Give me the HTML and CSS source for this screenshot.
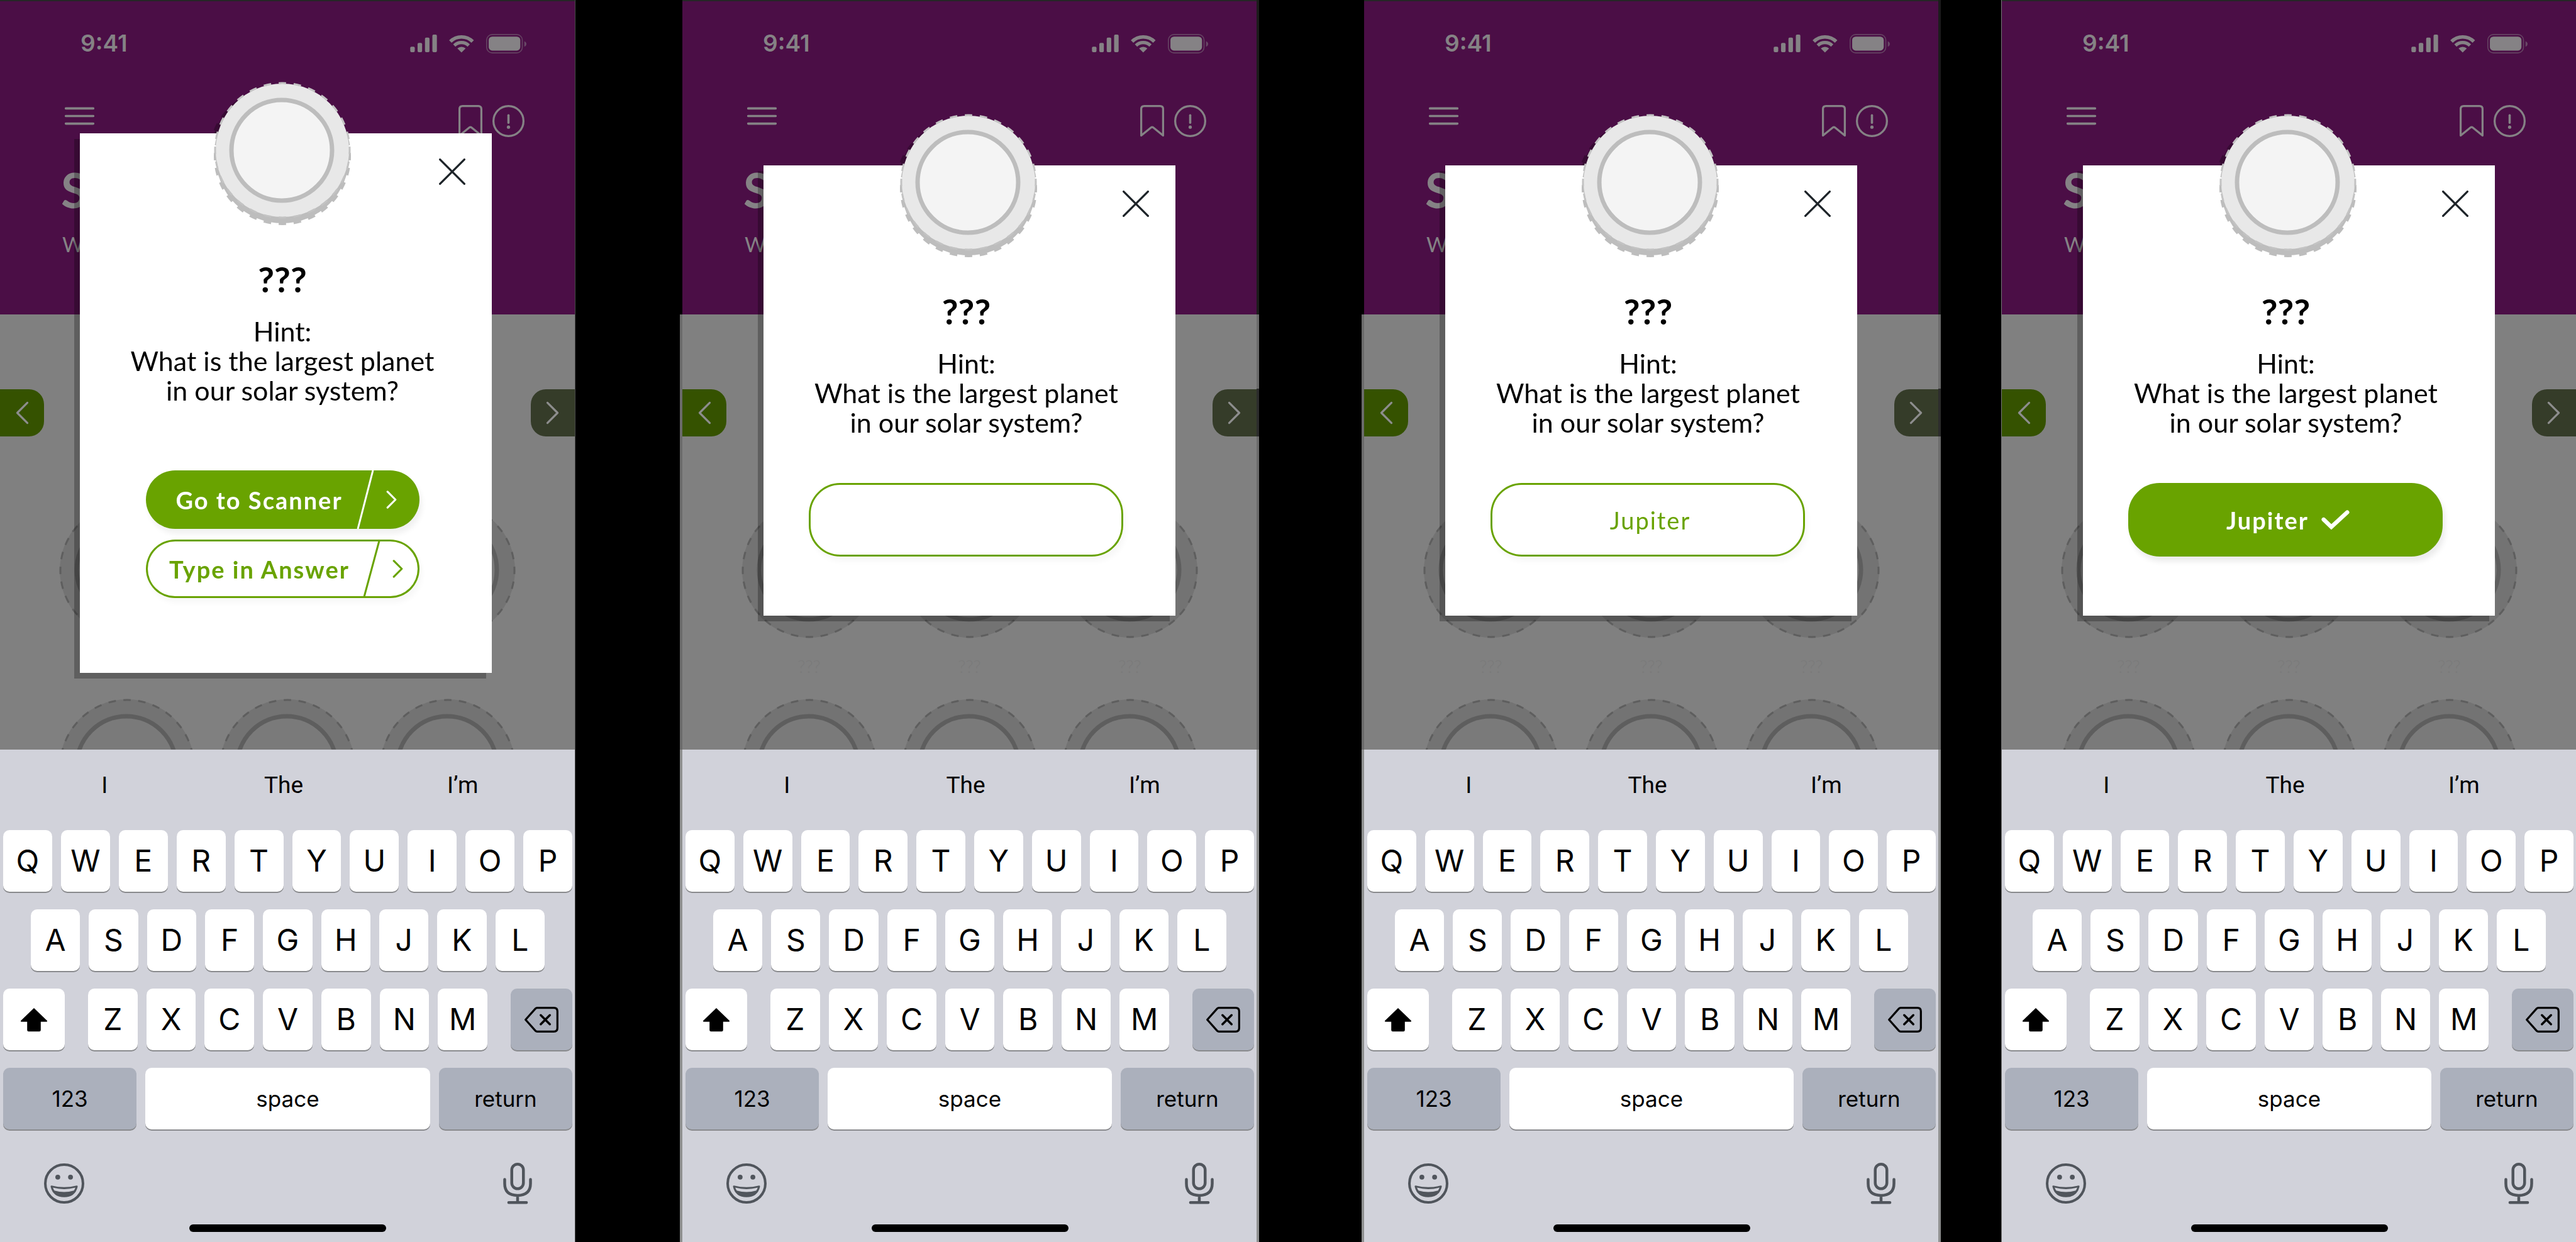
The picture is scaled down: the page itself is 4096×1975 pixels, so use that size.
FILE: index.html
```html
<!DOCTYPE html>
<html lang="en">
<head>
<meta charset="utf-8">
<title>Hint dialog states</title>
<link rel="stylesheet" href="styles.css">
</head>
<body>

<svg class="sprite" aria-hidden="true">
  <symbol id="i-signal" viewBox="0 0 53 35">
    <rect x="0" y="24" width="9" height="11" rx="2.5"/><rect x="14.6" y="16.500" width="9" height="18.500" rx="2.500"/>
    <rect x="29.300" y="6" width="9" height="29" rx="2.500"/><rect x="44" y="0" width="9" height="35" rx="2.500"/>
  </symbol>
  <symbol id="i-wifi" viewBox="0 0 50 36">
    <path d="M2.600 13.600A31.500 31.500 0 0 1 46.900 13.600" fill="none" stroke="currentColor" stroke-width="7"/>
    <path d="M10.400 21.600A20.500 20.500 0 0 1 39.100 21.600" fill="none" stroke="currentColor" stroke-width="6.500"/>
    <path d="M24.750 35.500L16.500 27.500A12 12 0 0 1 33 27.500Z"/>
  </symbol>
  <symbol id="i-battery" viewBox="0 0 79 38">
    <rect x="1" y="1" width="70" height="36" rx="11" fill="none" stroke="currentColor" stroke-width="2" opacity=".45"/>
    <rect x="5" y="5" width="62" height="27.500" rx="7"/>
    <path d="M75 14v11q4-2 4-5.500t-4-5.500z" opacity=".5"/>
  </symbol>
  <symbol id="i-menu" viewBox="0 0 58 36">
    <path d="M2 3H56M2 18H56M2 33H56" fill="none" stroke="currentColor" stroke-width="4.600" stroke-linecap="round"/>
  </symbol>
  <symbol id="i-bookmark" viewBox="0 0 47 63">
    <path d="M2 60V8Q2 2 8 2H39Q45 2 45 8V60L26 44.500Q23.500 42.500 21 44.500Z" fill="none" stroke="currentColor" stroke-width="4" stroke-linejoin="round"/>
  </symbol>
  <symbol id="i-alert" viewBox="0 0 63 63">
    <circle cx="31.500" cy="31.500" r="29.500" fill="none" stroke="currentColor" stroke-width="4"/>
    <path d="M31.500 20V35" stroke="currentColor" stroke-width="4.400" stroke-linecap="round"/><circle cx="31.500" cy="43.500" r="3.200"/>
  </symbol>
  <symbol id="i-close" viewBox="0 0 52 52">
    <path d="M2 2L50 50M50 2L2 50" fill="none" stroke="currentColor" stroke-width="4" stroke-linecap="round"/>
  </symbol>
  <symbol id="i-chevron" viewBox="0 0 26 46">
    <path d="M3 3L23 23L3 43" fill="none" stroke="currentColor" stroke-width="4" stroke-linecap="round" stroke-linejoin="round"/>
  </symbol>
  <symbol id="i-chevron-bold" viewBox="0 0 26 46">
    <path d="M3 3L23 23L3 43" fill="none" stroke="currentColor" stroke-width="5" stroke-linecap="round" stroke-linejoin="round"/>
  </symbol>
  <symbol id="i-chevron-left" viewBox="0 0 26 46">
    <path d="M23 3L3 23L23 43" fill="none" stroke="currentColor" stroke-width="4" stroke-linecap="round" stroke-linejoin="round"/>
  </symbol>
  <symbol id="i-check" viewBox="0 0 55 38">
    <path d="M4.500 18.500L19.500 33L50.500 4.500" fill="none" stroke="currentColor" stroke-width="8" stroke-linecap="round" stroke-linejoin="miter"/>
  </symbol>
  <symbol id="i-shift" viewBox="0 0 55 48">
    <path d="M27.500 1L53.500 26Q55 28 52 28H41V44.500Q41 47.500 38 47.500H17Q14 47.500 14 44.500V28H3Q0 28 1.500 26Z"/>
  </symbol>
  <symbol id="i-delete" viewBox="0 0 67 51">
    <path d="M25 2H58Q65 2 65 9V42Q65 49 58 49H25Q23 49 21.500 47.500L2 25.500L21.500 3.500Q23 2 25 2Z" fill="none" stroke="currentColor" stroke-width="4" stroke-linejoin="round"/>
    <path d="M32 16.500L50 34.500M50 16.500L32 34.500" fill="none" stroke="currentColor" stroke-width="4.400" stroke-linecap="round"/>
  </symbol>
  <symbol id="i-emoji" viewBox="0 0 79 79">
    <circle cx="39.500" cy="39.500" r="37" fill="none" stroke="currentColor" stroke-width="5"/>
    <circle cx="27" cy="27" r="4.800"/><circle cx="52" cy="27" r="4.800"/>
    <path fill-rule="evenodd" d="M15 43.500Q39.500 50 64 43.500Q66.500 43 66 46Q61 66.500 39.500 66.500Q18 66.500 13 46Q12.500 43 15 43.500ZM17.500 47.500Q18.500 51 20.500 53.500Q39.500 59 58.500 53.500Q60.500 51 61.500 47.500Q39.500 53.500 17.500 47.500Z"/>
  </symbol>
  <symbol id="i-mic" viewBox="0 0 57 82">
    <g fill="none" stroke="currentColor" stroke-width="5.600" stroke-linecap="round">
      <rect x="17" y="2.800" width="23" height="48.500" rx="11.500"/>
      <path d="M3 33V41Q3 64.500 28.500 64.500T54 41V33M28.500 65V78M11 78.500H46"/>
    </g>
  </symbol>
  <symbol id="i-ghost-cap" viewBox="0 0 216 216">
    <circle cx="108" cy="108" r="107" fill="#737373"/>
    <circle cx="108" cy="108" r="106" fill="none" stroke="#5e5e5e" stroke-width="3" pathLength="56" stroke-dasharray="1 1" stroke-dashoffset=".5"/>
    <circle cx="107" cy="107" r="79" fill="#7a7a7a" stroke="#5e5e5e" stroke-width="7"/>
  </symbol>
  <symbol id="i-cap" viewBox="0 0 218 228">
    <circle cx="109" cy="119" r="106" fill="#bdbdbd"/>
    <circle cx="109" cy="119" r="107" fill="none" stroke="#bdbdbd" stroke-width="4" pathLength="56" stroke-dasharray="1 1" stroke-dashoffset=".5"/>
    <circle cx="109" cy="109" r="106" fill="#e8e8e8"/>
    <circle cx="109" cy="109" r="107" fill="none" stroke="#c3c3c3" stroke-width="3" pathLength="56" stroke-dasharray="1 1" stroke-dashoffset=".5"/>
    <circle cx="108" cy="109" r="80" fill="#f4f4f4" stroke="#bdbdbd" stroke-width="7"/>
  </symbol>
</svg>

<template id="app-screen">
  <header class="top">
    <div class="status">
      <span class="time">9:41</span>
      <span class="status-icons">
        <svg class="signal"><use href="#i-signal"/></svg>
        <svg class="wifi"><use href="#i-wifi"/></svg>
        <svg class="battery"><use href="#i-battery"/></svg>
      </span>
    </div>
    <nav class="toolbar">
      <button class="icon-button" aria-label="Menu"><svg class="menu"><use href="#i-menu"/></svg></button>
      <span class="toolbar-end">
        <button class="icon-button" aria-label="Bookmark"><svg class="bookmark"><use href="#i-bookmark"/></svg></button>
        <button class="icon-button" aria-label="Alert"><svg class="alert"><use href="#i-alert"/></svg></button>
      </span>
    </nav>
    <h1 class="title">S</h1>
    <p class="subtitle">W</p>
  </header>
  <section class="gallery">
    <button class="pager pager-prev" aria-label="Previous"><svg class="pager-icon"><use href="#i-chevron-left"/></svg></button>
    <button class="pager pager-next" aria-label="Next"><svg class="pager-icon"><use href="#i-chevron"/></svg></button>
    <div class="caps">
      <figure class="cap-item"><svg class="ghost-cap"><use href="#i-ghost-cap"/></svg><figcaption>???</figcaption></figure>
      <figure class="cap-item"><svg class="ghost-cap"><use href="#i-ghost-cap"/></svg><figcaption>???</figcaption></figure>
      <figure class="cap-item"><svg class="ghost-cap"><use href="#i-ghost-cap"/></svg><figcaption>???</figcaption></figure>
      <svg class="ghost-cap"><use href="#i-ghost-cap"/></svg>
      <svg class="ghost-cap"><use href="#i-ghost-cap"/></svg>
      <svg class="ghost-cap"><use href="#i-ghost-cap"/></svg>
    </div>
  </section>
</template>

<template id="keyboard">
  <div class="keyboard">
    <div class="suggestions"><button>I</button><button>The</button><button>I’m</button></div>
    <div class="keys">
      <div class="key-row"><button>Q</button><button>W</button><button>E</button><button>R</button><button>T</button><button>Y</button><button>U</button><button>I</button><button>O</button><button>P</button></div>
      <div class="key-row key-row-inset"><button>A</button><button>S</button><button>D</button><button>F</button><button>G</button><button>H</button><button>J</button><button>K</button><button>L</button></div>
      <div class="key-row key-row-wide">
        <button class="key-side" aria-label="Shift"><svg class="shift"><use href="#i-shift"/></svg></button>
        <div class="key-row key-group"><button>Z</button><button>X</button><button>C</button><button>V</button><button>B</button><button>N</button><button>M</button></div>
        <button class="key-side key-dark" aria-label="Delete"><svg class="delete"><use href="#i-delete"/></svg></button>
      </div>
      <div class="key-row key-row-words"><button class="key-dark">123</button><button class="key-space">space</button><button class="key-dark">return</button></div>
    </div>
    <div class="kb-footer">
      <button class="icon-button" aria-label="Emoji"><svg class="emoji"><use href="#i-emoji"/></svg></button>
      <button class="icon-button" aria-label="Dictate"><svg class="mic"><use href="#i-mic"/></svg></button>
    </div>
    <div class="home-bar"></div>
  </div>
</template>

<main class="board">
  <article class="phone">
    <div class="screen"></div>
    <div class="dialog dialog-choices" role="dialog" aria-label="Hint">
      <svg class="cap"><use href="#i-cap"/></svg>
      <div class="card">
        <button class="icon-button close" aria-label="Close"><svg class="close-icon"><use href="#i-close"/></svg></button>
        <h2 class="name">???</h2>
        <p class="hint">Hint:<br>What is the largest planet<br>in our solar system?</p>
        <div class="choices">
          <button class="choice choice-solid"><span>Go to Scanner</span><svg class="slash" viewBox="0 0 26 93"><path d="M25 0L1 93"/></svg><svg class="choice-icon"><use href="#i-chevron-bold"/></svg></button>
          <button class="choice choice-line"><span>Type in Answer</span><svg class="slash" viewBox="0 0 26 93"><path d="M25 2L1 91"/></svg><svg class="choice-icon"><use href="#i-chevron-bold"/></svg></button>
        </div>
      </div>
    </div>
  </article>

  <article class="phone phone-2">
    <div class="screen"></div>
    <div class="dialog" role="dialog" aria-label="Hint">
      <svg class="cap"><use href="#i-cap"/></svg>
      <div class="card">
        <button class="icon-button close" aria-label="Close"><svg class="close-icon"><use href="#i-close"/></svg></button>
        <h2 class="name">???</h2>
        <p class="hint">Hint:<br>What is the largest planet<br>in our solar system?</p>
        <input class="answer" type="text" aria-label="Answer">
      </div>
    </div>
  </article>

  <article class="phone phone-3">
    <div class="screen"></div>
    <div class="dialog" role="dialog" aria-label="Hint">
      <svg class="cap"><use href="#i-cap"/></svg>
      <div class="card">
        <button class="icon-button close" aria-label="Close"><svg class="close-icon"><use href="#i-close"/></svg></button>
        <h2 class="name">???</h2>
        <p class="hint">Hint:<br>What is the largest planet<br>in our solar system?</p>
        <input class="answer" type="text" aria-label="Answer" value="Jupiter">
      </div>
    </div>
  </article>

  <article class="phone phone-4">
    <div class="screen"></div>
    <div class="dialog" role="dialog" aria-label="Hint">
      <svg class="cap"><use href="#i-cap"/></svg>
      <div class="card">
        <button class="icon-button close" aria-label="Close"><svg class="close-icon"><use href="#i-close"/></svg></button>
        <h2 class="name">???</h2>
        <p class="hint">Hint:<br>What is the largest planet<br>in our solar system?</p>
        <button class="answer answer-correct">Jupiter<svg class="check"><use href="#i-check"/></svg></button>
      </div>
    </div>
  </article>
</main>

<script src="script.js"></script>
</body>
</html>
```
FILE: script.js
```js
// Every phone shares the same app screen and keyboard.
for (const screen of document.querySelectorAll('.screen')) {
  screen.append(document.getElementById('app-screen').content.cloneNode(true));
  screen.append(document.getElementById('keyboard').content.cloneNode(true));
}
```
FILE: styles.css
```css
* { box-sizing: border-box; }

body {
  margin: 0;
  background: #000;
  font-family: Lato, "Liberation Sans", sans-serif;
}

.sprite { position: absolute; width: 0; height: 0; }

svg { display: block; fill: currentColor; overflow: visible; }

button {
  border: 0;
  padding: 0;
  background: none;
  font: inherit;
  color: inherit;
}

.icon-button { display: block; }

.board {
  display: grid;
  grid-template-columns: 915fr 169fr 915fr 169fr 915fr 99fr 914fr;
  overflow: hidden;
}

.phone {
  --edge: linear-gradient(#1c1c1c 500px, #6b6b6b 500px, #6b6b6b 618px, #2c2c2c 618px, #2c2c2c 694px, #6b6b6b 694px, #6b6b6b 1192px, #8f9090 1192px);
  position: relative;
  grid-row: 1;
  grid-column: 1;
  border-right: 1px solid #4a4a4a;
}

.phone-2 { grid-column: 3; border-left: 1px solid #333; }
.phone-3 { grid-column: 5; border-left: 1px solid #333; }
.phone-4 { grid-column: 7; border-left: 1px solid #777; border-right: 0; }

/* slivers of the device frame */
.phone-2::before, .phone-2::after, .phone-3::before, .phone-3::after {
  content: "";
  position: absolute;
  top: 0;
  bottom: 0;
  width: 4px;
  background: var(--edge);
}
.phone-2::before, .phone-3::before {
  right: 100%;
  background: linear-gradient(#000 500px, #6b6b6b 500px, #6b6b6b 1192px, #8f9090 1192px);
}
.phone-2::after, .phone-3::after { left: 100%; }

.screen {
  display: flex;
  flex-direction: column;
  height: 100vh;
  border-top: 2px solid #262626;
  background: #808080;
}

/* header */
.top {
  height: 498px;
  padding: 45px 77px 0 97px;
  background: #4b0e46;
  color: #858285;
}

.status {
  display: flex;
  justify-content: space-between;
  align-items: center;
  height: 44px;
  padding-left: 31px;
}

.time { font: 600 37px/44px Inter, sans-serif; }
.status-icons { display: flex; align-items: center; gap: 19px; }
.signal { width: 43px; height: 28px; }
.wifi { width: 40px; height: 29px; }
.battery { width: 64px; height: 31px; }

.toolbar {
  display: flex;
  justify-content: space-between;
  align-items: flex-start;
  height: 52px;
  margin-top: 76px;
  padding: 0 3px 0 6px;
}

.toolbar-end { display: flex; gap: 16px; }
.menu { width: 47px; height: 29px; margin-top: 3px; }
.bookmark { width: 38px; height: 51px; }
.alert { width: 51px; height: 51px; }

.title { margin: 43px 0 0; font-size: 76px; line-height: 80px; font-weight: 700; }
.subtitle { margin: 26px 0 0 2px; font-size: 33px; line-height: 40px; font-weight: 400; }

/* gallery behind the dialog */
.gallery {
  position: relative;
  flex: 1;
  min-height: 0;
  overflow: hidden;
}

.pager {
  position: absolute;
  top: 119px;
  display: flex;
  align-items: center;
  width: 70px;
  height: 75px;
  color: #8d8d8d;
}
.pager-prev { left: 0; justify-content: flex-end; padding-right: 24px; border-radius: 0 24px 24px 0; background: #355200; }
.pager-next { right: 0; padding-left: 24px; border-radius: 24px 0 0 24px; background: #353c29; }
.pager-icon { width: 21px; height: 37px; }

.caps {
  display: grid;
  grid-template-columns: repeat(3, 216px);
  justify-content: center;
  gap: 36px 39px;
  padding-top: 299px;
}
.cap-item { margin: 0; text-align: center; font-size: 28px; line-height: 32px; font-weight: 300; color: #7a7a7a; }
.cap-item figcaption { margin-top: 28px; }
.ghost-cap { width: 216px; height: 216px; }

/* dialog */
.dialog {
  position: absolute;
  top: 263px;
  left: 0;
  right: 0;
  width: 655px;
  margin: 0 auto;
  filter: drop-shadow(-9px 9px 0 rgba(0, 0, 0, .26));
}
.dialog-choices { top: 212px; right: 6px; }

.cap { position: absolute; top: -82px; left: 217px; width: 218px; height: 228px; }
.dialog-choices .cap { left: 213px; }

.card {
  padding: 200px 86px 94px 76px;
  background: #fff;
  color: #000;
  text-align: center;
}
.dialog-choices .card { padding-bottom: 119px; }

.close { position: absolute; top: 40px; right: 42px; color: #1d2328; }
.close-icon { width: 42px; height: 42px; }

.name { margin: 0; font-size: 56px; line-height: 64px; font-weight: 700; }
.hint { margin: 27px 0 73px; font-size: 43px; line-height: 47px; }
.dialog-choices .hint { margin-bottom: 104px; }

.choices { display: grid; gap: 17px; padding: 0 29px; }

.choice {
  display: flex;
  align-items: center;
  height: 93px;
  border-radius: 47px;
  font-size: 38px;
  line-height: 44px;
  font-weight: 700;
  letter-spacing: 2px;
  white-space: nowrap;
  box-shadow: 4px 8px 8px rgba(0, 0, 0, .06);
}
.choice span { flex: 1; text-align: center; }
.choice-solid { padding: 0 36px 0 25px; background: #69a300; color: #fff; }
.choice-line { padding: 0 26px 0 16px; background: #fff; color: #69a300; box-shadow: inset 0 0 0 3px #69a300, 4px 8px 8px rgba(0, 0, 0, .03); }
.slash { width: 26px; height: 93px; fill: none; stroke: currentColor; stroke-width: 3; }
.choice-icon { width: 17px; height: 29px; margin-left: 20px; }

.answer {
  display: flex;
  align-items: center;
  justify-content: center;
  gap: 20px;
  width: 500px;
  height: 117px;
  margin-left: -4px;
  padding: 0 0 0 8px;
  border: 3px solid #69a300;
  border-radius: 50px;
  background: #fff;
  color: #69a300;
  font: 400 38px/44px Lato, sans-serif;
  letter-spacing: 2px;
  text-align: center;
  box-shadow: 4px 8px 8px rgba(0, 0, 0, .03);
}
.answer-correct {
  background: #69a300;
  color: #fff;
  font-weight: 700;
  box-shadow: 4px 8px 8px rgba(0, 0, 0, .08);
}
.check { width: 45px; height: 31px; }

/* keyboard */
.keyboard {
  padding: 0 4px 16px 5px;
  background: #d1d2da;
  color: #000;
  font-family: Inter, sans-serif;
}

.suggestions {
  display: grid;
  grid-template-columns: repeat(3, 1fr);
  height: 114px;
  padding: 0 32px 0 19px;
  font: 400 37px/44px Roboto, sans-serif;
}

.keys { display: grid; gap: 28px; margin-top: 14px; }
.key-row { display: flex; gap: 14px; }
.key-row button {
  display: flex;
  flex: 1 1 0;
  align-items: center;
  justify-content: center;
  height: 98px;
  border-radius: 10px;
  background: #fff;
  box-shadow: 0 2px 0 #898a8d;
  font-size: 48px;
  line-height: 56px;
}
.key-row-inset { padding: 0 44px; }
.key-row-wide { gap: 37px; }
.key-group { flex: 1; }
.key-row .key-side { flex: 0 0 98px; }
.key-row .key-dark { background: #abb0bc; }
.key-row-words button { flex: 0 0 212px; font-size: 35px; line-height: 44px; }
.key-row-words .key-space { flex: 1; }
.shift { width: 44px; height: 39px; }
.delete { width: 54px; height: 41px; }

.kb-footer {
  display: flex;
  justify-content: space-between;
  height: 66px;
  margin-top: 53px;
  padding: 0 64px 0 65px;
  color: #50555c;
}
.emoji { width: 64px; height: 64px; }
.mic { width: 46px; height: 66px; }

.home-bar {
  width: 313px;
  height: 12px;
  margin: 32px auto 0;
  border-radius: 6px;
  background: #000;
}
```
